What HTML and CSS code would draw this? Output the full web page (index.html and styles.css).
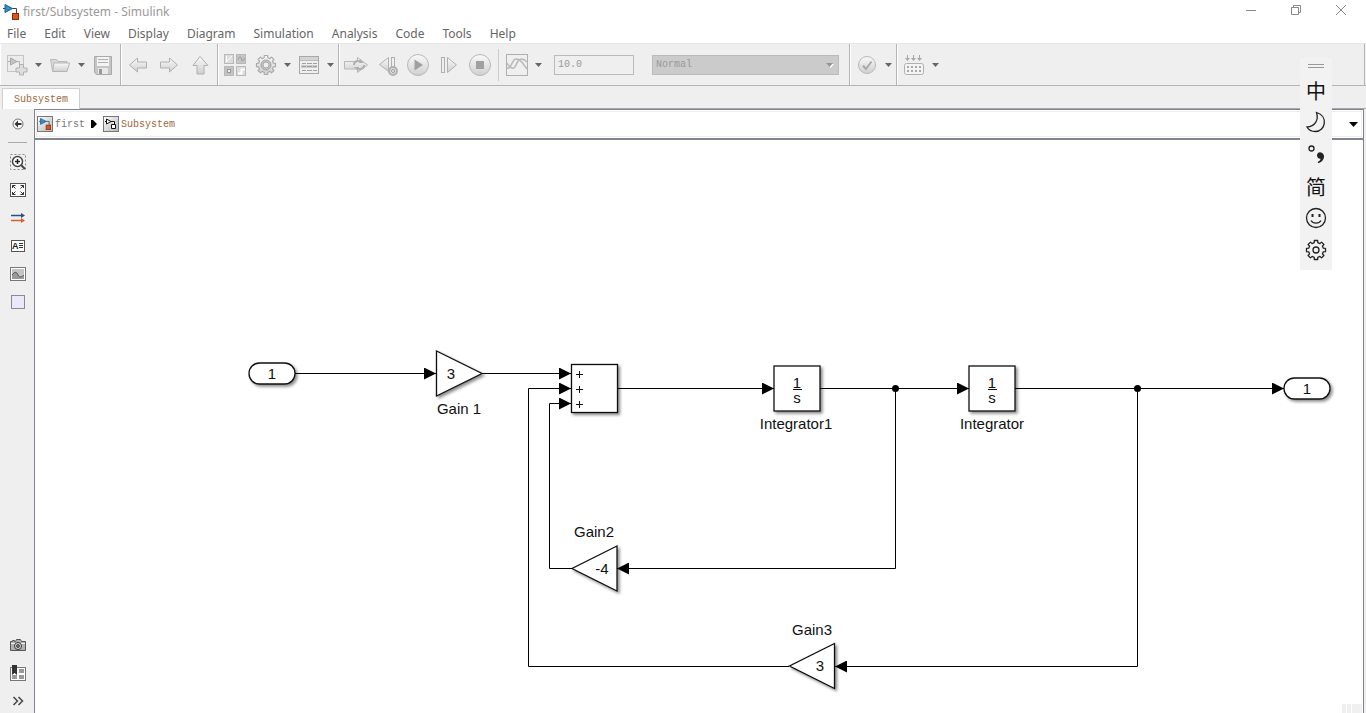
FILE: index.html
```html
<!DOCTYPE html>
<html lang="en">

<head>
    <meta charset="UTF-8">
    <meta name="viewport" content="width=device-width, initial-scale=1.0">
    <title>first/Subsystem - Simulink</title>
    <link rel="stylesheet" href="styles.css">
</head>

<body>
    <!-- Shared icon shapes -->
    <svg class="defs" width="0" height="0" aria-hidden="true">
        <defs>
            <linearGradient id="silver" x1="0" y1="0" x2="0" y2="1">
                <stop offset="0" stop-color="#fafafa" />
                <stop offset="1" stop-color="#cfcfcf" />
            </linearGradient>
            <linearGradient id="tile" x1="0" y1="0" x2="1" y2="1">
                <stop offset="0" stop-color="#ffffff" />
                <stop offset="1" stop-color="#b8b8b8" />
            </linearGradient>
            <symbol id="model" viewBox="0 0 16 16">
                <path d="M0 4.500h2M9 4.500h4.500V10" fill="none" stroke="#444" />
                <path d="M2 .5L9.500 4.500L2 8.500z" fill="#2f8fc8" stroke="#1b5f8d" />
                <rect x="9.500" y="9.500" width="6" height="6" fill="#d9531e" stroke="#8c2d08" />
            </symbol>
            <symbol id="caret" viewBox="0 0 7 4">
                <path d="M0 0h7L3.500 4z" fill="#666" />
            </symbol>
            <symbol id="gear" viewBox="-11 -11 22 22">
                <path d="M-1.800-7.300L-1.700-9.500H1.700L1.800-7.300L3.900-6.400L5.500-7.900L7.900-5.500L6.400-3.900L7.300-1.800L9.500-1.700V1.700L7.300 1.800L6.400 3.900L7.900 5.500L5.500 7.900L3.900 6.400L1.800 7.300L1.700 9.500H-1.700L-1.800 7.300L-3.900 6.400L-5.500 7.900L-7.900 5.500L-6.400 3.900L-7.300 1.800L-9.500 1.700V-1.700L-7.300-1.800L-6.400-3.900L-7.900-5.500L-5.500-7.900L-3.900-6.400z" stroke-linejoin="round" />
            </symbol>
        </defs>
    </svg>

    <div class="window">
        <header class="title-bar">
            <svg class="title-icon" width="16" height="16"><use href="#model" /></svg>
            <span class="title">first/Subsystem - Simulink</span>
            <div class="window-buttons">
                <button type="button" aria-label="Minimize"><svg width="12" height="12"><path d="M1 6.500h10" /></svg></button>
                <button type="button" aria-label="Restore"><svg width="12" height="12"><path d="M1.500 3.500h7v7h-7zM3.500 3.500v-2h7v7h-2" /></svg></button>
                <button type="button" aria-label="Close"><svg width="12" height="12"><path d="M1 1l10 10M11 1L1 11" /></svg></button>
            </div>
        </header>

        <nav class="menu">
            <button type="button">File</button>
            <button type="button">Edit</button>
            <button type="button">View</button>
            <button type="button">Display</button>
            <button type="button">Diagram</button>
            <button type="button">Simulation</button>
            <button type="button">Analysis</button>
            <button type="button">Code</button>
            <button type="button">Tools</button>
            <button type="button">Help</button>
        </nav>

        <div class="toolbar">
            <div class="group">
                <button type="button" class="tool" aria-label="New model">
                    <svg width="22" height="22"><rect x="1.500" y="1.500" width="16" height="16" fill="#ececec" stroke="#c4c4c4" /><path d="M2 7.500h2M10 7.500h3.500V12" fill="none" stroke="#b0b0b0" /><path d="M4.500 4L11 7.500L4.500 11z" fill="#c4c4c4" stroke="#aaa" /><path d="M13.500 10.500h4v3.500h3.500v4h-3.500v3h-4v-3h-3.500v-4h3.500z" fill="#dedede" stroke="#b0b0b0" /></svg>
                </button>
                <button type="button" class="drop" aria-label="New options"><svg width="7" height="4"><use href="#caret" /></svg></button>
                <button type="button" class="tool" aria-label="Open">
                    <svg width="22" height="22"><path d="M3.500 16.500L1.500 5.500h6l1.500 2h9v3" fill="#d8d8d8" stroke="#bbb" /><path d="M3.500 17.500l1.500-8.500h15.500l-2.500 8.500z" fill="url(#silver)" stroke="#b5b5b5" /></svg>
                </button>
                <button type="button" class="drop" aria-label="Open options"><svg width="7" height="4"><use href="#caret" /></svg></button>
                <button type="button" class="tool" aria-label="Save">
                    <svg width="22" height="22"><path d="M2.500 2.500h17v18h-15l-2-2z" fill="#c6c6c6" stroke="#aaa" /><rect x="5" y="3" width="12" height="9" fill="#f4f4f4" /><path d="M6 5.500h10M6 8.500h10" stroke="#b0b0b0" /><rect x="6" y="14" width="10" height="6" fill="#e9e9e9" /><rect x="7" y="15" width="3" height="5" fill="#999" /></svg>
                </button>
            </div>

            <div class="group spaced">
                <button type="button" class="tool" aria-label="Back">
                    <svg width="22" height="22"><path d="M2.500 11l8-7v4h9v6h-9v4z" fill="url(#silver)" stroke="#b0b0b0" /></svg>
                </button>
                <button type="button" class="tool" aria-label="Forward">
                    <svg width="22" height="22"><path d="M19.500 11l-8-7v4h-9v6h9v4z" fill="url(#silver)" stroke="#b0b0b0" /></svg>
                </button>
                <button type="button" class="tool" aria-label="Up to parent">
                    <svg width="22" height="22"><path d="M11 2.500l8 9h-4v8.500h-7v-8.500h-4z" fill="url(#silver)" stroke="#b0b0b0" /></svg>
                </button>
            </div>

            <div class="group">
                <button type="button" class="tool with-space" aria-label="Library browser">
                    <svg width="22" height="22" fill="#dcdcdc" stroke="#b8b8b8"><rect x=".5" y=".5" width="9" height="9" /><rect x="12.500" y=".5" width="9" height="9" fill="#c6c6c6" /><rect x=".5" y="12.500" width="9" height="9" fill="#c2c2c2" /><rect x="12.500" y="12.500" width="9" height="9" /><path d="M2.500 2v6L8 2" fill="none" stroke="#fff" /><path d="M14 6c1-4 3-4 3.500-1s2 3 3-1" fill="none" stroke="#999" /><rect x="3.500" y="15.500" width="3" height="3" fill="#eee" stroke="#999" /><path d="M14 19.500h3.500v-4H21" fill="none" stroke="#fff" stroke-width="2" /></svg>
                </button>
                <button type="button" class="tool" aria-label="Model configuration">
                    <svg width="22" height="22"><use href="#gear" fill="url(#silver)" stroke="#aaa" stroke-width="1.200" /><circle cx="11" cy="11" r="5" fill="#c4c4c4" stroke="#a3a3a3" /><circle cx="11" cy="11" r="3" fill="#efefef" stroke="#aaa" /></svg>
                </button>
                <button type="button" class="drop" aria-label="Configuration options"><svg width="7" height="4"><use href="#caret" /></svg></button>
                <button type="button" class="tool" aria-label="Model explorer">
                    <svg width="22" height="22"><rect x="1.500" y="2.500" width="19" height="17" fill="#efefef" stroke="#a8a8a8" /><path d="M2 4.500h18" stroke="#d4d4d4" stroke-width="3" /><path d="M2 6.500h18" stroke="#bbb" /><rect x="3" y="11" width="16" height="3" fill="#ccc" /><path d="M4 9.500h4m1 0h5m1 0h4M4 12.500h4m1 0h5m1 0h4M4 16.500h4m1 0h5m1 0h4" stroke="#a0a0a0" /></svg>
                </button>
                <button type="button" class="drop" aria-label="Explorer options"><svg width="7" height="4"><use href="#caret" /></svg></button>
            </div>

            <div class="group simulate">
                <div class="run-buttons">
                    <button type="button" class="tool" aria-label="Fast restart">
                        <svg width="26" height="22"><path d="M1.500 7.500h13v-4l10 7.500-10 7.500v-3.500h-13z" fill="url(#silver)" stroke="#b8b8b8" /><path d="M11 11c0-4 4-5 7-3M21 11c0 4-4 5-7 3" fill="none" stroke="#b0b0b0" stroke-width="2" /><path d="M17 5l4 4h-5zM15 17l-4-4h5z" fill="#b0b0b0" /></svg>
                    </button>
                    <button type="button" class="tool" aria-label="Step back">
                        <svg width="22" height="22"><path d="M12.500 3.500v14L3.500 10.500z" fill="url(#silver)" stroke="#b0b0b0" /><rect x="15.500" y="3.500" width="3" height="12" fill="#eee" stroke="#b0b0b0" /><circle cx="17" cy="17" r="4" fill="#ddd" stroke="#b0b0b0" stroke-width="2" /><circle cx="17" cy="17" r="1.500" fill="#f2f2f2" stroke="#999" /></svg>
                    </button>
                    <button type="button" class="tool" aria-label="Run">
                        <svg width="22" height="22"><circle cx="11" cy="11" r="10.500" fill="url(#silver)" stroke="#b8b8b8" /><path d="M7.500 5.500v11l8.500-5.500z" fill="#a0a0a0" /></svg>
                    </button>
                    <button type="button" class="tool" aria-label="Step forward">
                        <svg width="22" height="22"><rect x="3.500" y="3.500" width="3" height="15" fill="#eee" stroke="#b0b0b0" /><path d="M9.500 3.500v15l9-7.500z" fill="url(#silver)" stroke="#b0b0b0" /></svg>
                    </button>
                    <button type="button" class="tool" aria-label="Stop">
                        <svg width="22" height="22"><circle cx="11" cy="11" r="10.500" fill="url(#silver)" stroke="#b8b8b8" /><rect x="7" y="7" width="8" height="8" fill="#a0a0a0" /></svg>
                    </button>
                </div>
                <span class="separator"></span>
                <button type="button" class="tool" aria-label="Simulation data inspector">
                    <svg width="22" height="22"><rect x=".5" y=".5" width="21" height="21" fill="#efefef" stroke="#b0b0b0" /><path d="M1 14c4 2 5-9 9-9s6 3 11 10" fill="none" stroke="#b8b8b8" stroke-width="1.500" /><path d="M1 9c3 6 7 7 9 2s5-9 11-3" fill="none" stroke="#b8b8b8" stroke-width="1.500" /></svg>
                </button>
                <button type="button" class="drop" aria-label="Inspector options"><svg width="7" height="4"><use href="#caret" /></svg></button>
                <input class="stop-time" type="text" value="10.0" aria-label="Simulation stop time" disabled>
                <div class="mode">
                    <select aria-label="Simulation mode" disabled>
                        <option>Normal</option>
                    </select>
                    <svg class="mode-arrow" width="8" height="5"><path d="M1 1h7L4.500 5z" fill="#fff" /><path d="M0 0h7L3.500 4z" fill="#959595" /></svg>
                </div>
            </div>

            <div class="group">
                <button type="button" class="tool" aria-label="Model advisor">
                    <svg width="22" height="22"><circle cx="11" cy="11" r="8.500" fill="url(#silver)" stroke="#b8b8b8" /><path d="M7 11.500l3 3.500 5.500-7.500" fill="none" stroke="#aaa" stroke-width="2" /></svg>
                </button>
                <button type="button" class="drop" aria-label="Advisor options"><svg width="7" height="4"><use href="#caret" /></svg></button>
            </div>

            <div class="group last">
                <button type="button" class="tool" aria-label="Build model">
                    <svg width="22" height="22"><path d="M4.500 1v4M10.500 1v4M16.500 1v4" stroke="#a8a8a8" /><path d="M2 4h5L4.500 7zM8 4h5l-2.500 3zM14 4h5l-2.500 3z" fill="#a8a8a8" /><rect x="1.500" y="9.500" width="19" height="11" rx="2" fill="#f4f4f4" stroke="#b0b0b0" /><path d="M4 13h14M4 17h14" stroke="#a8a8a8" stroke-width="2" stroke-dasharray="2 2" /></svg>
                </button>
                <button type="button" class="drop" aria-label="Build options"><svg width="7" height="4"><use href="#caret" /></svg></button>
            </div>
        </div>

        <div class="tabs">
            <button type="button" class="tab">Subsystem</button>
        </div>

        <div class="workspace">
            <aside class="palette">
                <button type="button" aria-label="Hide model browser">
                    <svg width="16" height="16"><circle cx="8" cy="8" r="5" fill="#f8f8f8" stroke="#777" /><path d="M4.500 8L8 4.500V7h3.500v2H8v2.500z" fill="#333" /></svg>
                </button>
                <hr>
                <button type="button" aria-label="Zoom">
                    <svg width="16" height="16"><rect x=".5" y=".5" width="15" height="15" fill="none" stroke="#888" stroke-dasharray="2 2" /><circle cx="7.500" cy="7.500" r="5" fill="#fff" stroke="#444" stroke-width="1.500" /><path d="M5 7.500h5M7.500 5v5" stroke="#222" stroke-width="1.500" /><path d="M11 11l4 4" stroke="#444" stroke-width="2" /></svg>
                </button>
                <button type="button" aria-label="Fit to view">
                    <svg width="16" height="16"><rect x=".5" y="1.500" width="15" height="13" fill="#fff" stroke="#555" /><path d="M2.500 6V3.500H5.500M2.500 3.500l3 3M13.500 6V3.500h-3M13.500 3.500l-3 3M2.500 10v2.500h3M2.500 12.500l3-3M13.500 10v2.500h-3M13.500 12.500l-3-3" fill="none" stroke="#333" /></svg>
                </button>
                <button type="button" aria-label="Sample time display">
                    <svg width="16" height="16"><path d="M1 5.500h11" stroke="#2c4f80" stroke-width="1.500" /><path d="M11 3l4 2.500-4 2.500z" fill="#2c4f80" /><path d="M1 10.500h11" stroke="#d6622a" stroke-width="1.500" /><path d="M11 8l4 2.500-4 2.500z" fill="#d6622a" /></svg>
                </button>
                <button type="button" aria-label="Annotation">
                    <svg width="16" height="16"><rect x="1.500" y="2.500" width="13" height="11" fill="#fff" stroke="#555" /><text class="icon-text" x="2" y="11">A</text><path d="M9 5.500h4M9 7.500h4M9 9.500h4" stroke="#333" /></svg>
                </button>
                <button type="button" aria-label="Image">
                    <svg width="16" height="16"><rect x=".5" y="1.500" width="15" height="13" fill="#fff" stroke="#777" /><rect x="2" y="3" width="12" height="10" fill="#c4c4c4" /><path d="M2 13V9c3-4 5-3 6 0s4 2 6 0v4z" fill="#999" /><path d="M2 9c3-4 5-3 6 0s4 2 6 0" fill="none" stroke="#555" /></svg>
                </button>
                <button type="button" aria-label="Area">
                    <svg width="16" height="16"><rect x="1.500" y="1.500" width="13" height="13" fill="#e9e9fa" stroke="#8a8a90" /></svg>
                </button>
                <div class="palette-bottom">
                    <button type="button" aria-label="Screenshots">
                        <svg width="16" height="16"><path d="M.5 4.500h2v-1h2v1h1l1-2h4l1 2h4v9H.5z" fill="#b0b0b0" stroke="#555" /><path d="M1 6.500h14" stroke="#eee" /><circle cx="8" cy="9" r="3.500" fill="#ddd" stroke="#333" /><circle cx="8" cy="9" r="1.500" fill="#777" stroke="#444" /></svg>
                    </button>
                    <button type="button" aria-label="Model data">
                        <svg width="16" height="16"><rect x=".5" y="2.500" width="15" height="13" fill="#fff" stroke="#777" /><path d="M9 4h5v4H9zM2 10h5v4H2zM9 10h5v4H9z" fill="#999" /><path d="M2 0h5v10L4.500 8 2 10z" fill="#333" /></svg>
                    </button>
                    <button type="button" aria-label="More">
                        <svg width="16" height="16"><path d="M3.500 4l4 4-4 4M8.500 4l4 4-4 4" fill="none" stroke="#444" stroke-width="1.500" /></svg>
                    </button>
                </div>
            </aside>

            <main class="editor">
                <nav class="breadcrumb">
                    <a href="#first">
                        <svg width="16" height="16"><rect x=".5" y=".5" width="15" height="15" fill="url(#tile)" stroke="#777" /><svg x="2" y="2" width="12" height="12"><use href="#model" /></svg></svg>
                        <span>first</span>
                    </a>
                    <svg width="6" height="8"><path d="M0 0h2l4 4-4 4H0z" /></svg>
                    <a href="#subsystem" class="current">
                        <svg width="16" height="16"><rect x=".5" y=".5" width="15" height="15" fill="url(#tile)" stroke="#777" /><path d="M3.500 3v5l4.500-2.500zM8 5.500h3.500V8M8.500 8.500h4v4h-4z" fill="#fff" stroke="#111" /><path d="M2 5.500h2" stroke="#111" /></svg>
                        <span>Subsystem</span>
                    </a>
                    <button type="button" class="history" aria-label="Open hierarchy"><svg width="9" height="5"><path d="M0 0h9L4.500 5z" /></svg></button>
                </nav>

                <div class="canvas">
                    <svg class="diagram" role="img" aria-label="Block diagram">
                        <defs>
                            <marker id="arrow" markerWidth="12" markerHeight="12" refX="12" refY="6" orient="auto" markerUnits="userSpaceOnUse">
                                <path d="M0 0L12 6L0 12z" />
                            </marker>
                            <filter id="shadow" x="-20%" y="-20%" width="150%" height="150%">
                                <feDropShadow dx="2" dy="2" stdDeviation="1.500" flood-color="#000" flood-opacity=".45" />
                            </filter>
                        </defs>
                        <g transform="translate(-35 -140)">
                            <!-- Blocks -->
                            <g class="block">
                                <rect x="249" y="363" width="46" height="21" rx="10.500" />
                                <path d="M436.500 351v45L482 373.500z" />
                                <rect x="571.500" y="364.500" width="46" height="48" />
                                <rect x="774" y="366" width="46" height="45" />
                                <rect x="969" y="366" width="46" height="45" />
                                <rect x="1284" y="378" width="46" height="21" rx="10.500" />
                                <path d="M617 546v45L572 568.500z" />
                                <path d="M834.500 643.500v45L789.500 666z" />
                            </g>

                            <!-- Signals -->
                            <g class="signal">
                                <path d="M295 373.500H436" />
                                <path d="M482 373.500H571" />
                                <path d="M618 388.500H774" />
                                <path d="M820 388.500H969" />
                                <path d="M1015 388.500H1284" />
                                <path d="M895.500 388.500V568.500H617" />
                                <path d="M572 568.500H549.500V403.500H571" />
                                <path d="M1137.500 388.500V666.500H835" />
                                <path d="M789 666.500H528.500V388.500H571" />
                            </g>
                            <circle cx="895.500" cy="388.500" r="3.500" />
                            <circle cx="1137.500" cy="388.500" r="3.500" />

                            <!-- Values -->
                            <g class="value">
                                <text x="272" y="379">1</text>
                                <text x="451" y="379">3</text>
                                <text x="797" y="388">1</text>
                                <text x="797" y="403">s</text>
                                <text x="992" y="388">1</text>
                                <text x="992" y="403">s</text>
                                <text x="1307" y="394">1</text>
                                <text x="602" y="574">-4</text>
                                <text x="820" y="671">3</text>
                            </g>
                            <path class="wire" d="M793 389.500h9M988 389.500h9" />
                            <path class="wire" d="M576 374.500h7M579.500 371v7M576 389.500h7M579.500 386v7M576 404.500h7M579.500 401v7" />

                            <!-- Names -->
                            <g class="name">
                                <text x="459" y="414">Gain 1</text>
                                <text x="796" y="429">Integrator1</text>
                                <text x="992" y="429">Integrator</text>
                                <text x="594" y="537">Gain2</text>
                                <text x="812" y="635">Gain3</text>
                            </g>
                        </g>
                    </svg>
                    <div class="corner"><i></i><i></i><i></i></div>
                </div>
            </main>
        </div>

        <!-- Floating input method bar -->
        <div class="ime">
            <span class="handle"></span>
            <button type="button" lang="zh">中</button>
            <button type="button" aria-label="Half width">
                <svg width="22" height="22"><path d="M11.500 1.500c12 3.500 9 19 -1 19c-4 0-7-1.500-8.500-4.500c8-.5 12-7 9.500-14.500z" /></svg>
            </button>
            <button type="button" aria-label="Punctuation">
                <svg width="22" height="22"><circle cx="6.500" cy="5.500" r="2.500" /><path d="M13 19.500c3-1.500 3.500-3 3-4.500c-4 .5-4.500-5-1-5c5 0 4.500 8-2 9.500z" fill="#222" /></svg>
            </button>
            <button type="button" lang="zh">简</button>
            <button type="button" aria-label="Emoji">
                <svg width="22" height="22"><circle cx="11" cy="11" r="9.500" /><path d="M6 13.500c2 3.500 8 3.500 10 0" /><path d="M7.500 7v3M14.500 7v3" stroke-width="2" /></svg>
            </button>
            <button type="button" aria-label="Settings">
                <svg width="22" height="22"><use href="#gear" /><circle cx="11" cy="11" r="3" /></svg>
            </button>
        </div>
    </div>
</body>

</html>
```

FILE: styles.css
```css
* {
    box-sizing: border-box;
}

body {
    margin: 0;
    background-color: #efefef;
    font-family: "Noto Sans", "Open Sans", sans-serif;
    font-size: 12px;
}

button {
    display: flex;
    justify-content: center;
    align-items: center;
    margin: 0;
    padding: 0;
    border: 0;
    background: none;
    font: inherit;
    color: inherit;
}

svg {
    display: block;
    flex: none;
}

.defs {
    position: absolute;
}

.window {
    position: relative;
    display: flex;
    flex-direction: column;
    height: 100vh;
    overflow: hidden;
}

/* Title and menu */
.title-bar {
    display: flex;
    align-items: center;
    gap: 4px;
    height: 23px;
    padding-left: 3px;
    background: #fff;
    color: #999;
}

.window-buttons {
    display: flex;
    align-self: flex-start;
    margin-left: auto;
    padding-right: 3px;
}

.window-buttons button {
    width: 45px;
    height: 20px;
}

.window-buttons svg {
    fill: none;
    stroke: #888;
}

.menu {
    display: flex;
    gap: 18px;
    height: 20px;
    padding-left: 7px;
    background: #fff;
    color: #666;
}

/* Toolbar */
.toolbar {
    display: flex;
    height: 43px;
    border-top: 1px solid #e6e6e6;
    border-bottom: 1px solid #b4b4b4;
}

.group {
    display: flex;
    align-items: center;
    padding-left: 5px;
    border-left: 1px solid #fff;
    border-right: 1px solid #b4b4b4;
}

.group:first-child {
    padding-right: 6px;
}

.group.last {
    flex: 1;
    margin-right: 1px;
}

.spaced {
    gap: 9px;
    padding-right: 6px;
}

.tool {
    width: 22px;
    height: 22px;
}

.with-space {
    margin-right: 9px;
}

.drop {
    width: 16px;
    height: 22px;
    margin: 0 3px 0 2px;
}

.drop:last-child {
    margin-right: 0;
}

.simulate {
    padding-right: 10px;
}

.run-buttons {
    display: flex;
    gap: 9px;
}

.separator {
    width: 1px;
    height: 32px;
    margin: 0 7px;
    background: #ccc;
}

.stop-time,
.mode select {
    height: 20px;
    border: 1px solid #bbb;
    border-radius: 0;
    font-family: "Liberation Mono", monospace;
    font-size: 10px;
    color: #999;
    opacity: 1;
}

.stop-time {
    width: 80px;
    margin-left: 5px;
    padding: 0 3px;
    background: #efefef;
}

.mode {
    position: relative;
    width: 187px;
    margin-left: 18px;
}

.mode select {
    display: block;
    width: 100%;
    padding: 0 3px;
    appearance: none;
    background: #cbcbcb;
}

.mode-arrow {
    position: absolute;
    top: 8px;
    right: 5px;
}

/* Tabs */
.tabs {
    display: flex;
    align-items: flex-end;
    height: 23px;
    padding-left: 2px;
    background: linear-gradient(90deg, #efefef 34px, #a4a6aa 34px) bottom / 100% 1px no-repeat;
}

.tab {
    width: 78px;
    height: 21px;
    border: 1px solid #d0d0d0;
    border-bottom: 0;
    background: #fff;
    font-family: "Liberation Mono", monospace;
    font-size: 10px;
    color: #a0693c;
}

/* Workspace */
.workspace {
    display: flex;
    flex: 1;
    min-height: 0;
}

.palette {
    display: flex;
    flex-direction: column;
    width: 34px;
    padding: 1px 0 0 2px;
}

.palette button {
    width: 32px;
    height: 28px;
}

.palette hr {
    width: 19px;
    margin: 4px 0 5px 6px;
    border: 0;
    border-top: 1px solid #aaa;
}

.palette-bottom {
    margin-top: auto;
    margin-bottom: -2px;
}

.icon-text {
    font: bold 9px "Liberation Sans", sans-serif;
    fill: #222;
}

.editor {
    display: flex;
    flex: 1;
    flex-direction: column;
    margin-right: 2px;
    border: 1px solid #7f848e;
    border-bottom: 0;
    background: #fff;
}

.breadcrumb {
    display: flex;
    align-items: center;
    gap: 6px;
    height: 30px;
    padding: 0 5px 0 2px;
    border-bottom: 2px solid #7f848e;
    font-family: "Liberation Mono", monospace;
    font-size: 10px;
    box-shadow: inset 0 0 0 1px #fff, inset 0 0 0 2px #eee;
}

.breadcrumb a {
    display: flex;
    align-items: center;
    gap: 2px;
    color: #777;
    text-decoration: none;
}

.breadcrumb .current {
    color: #a0693c;
}

.history {
    width: 10px;
    height: 20px;
    margin-left: auto;
}

/* Block diagram */
.canvas {
    position: relative;
    flex: 1;
    min-height: 0;
}

.diagram {
    width: 100%;
    height: 100%;
    font-family: "Liberation Sans", Arial, sans-serif;
    font-size: 15px;
    text-anchor: middle;
}

.block > * {
    fill: #fff;
    stroke: #111;
    stroke-width: 1.3;
    filter: url(#shadow);
}

.signal path {
    fill: none;
    stroke: #000;
    marker-end: url(#arrow);
}

.signal path,
.wire {
    stroke-width: 1;
}

.wire {
    fill: none;
    stroke: #111;
}

.name,
.value {
    fill: #111;
}

.corner {
    position: absolute;
    right: 1px;
    bottom: 0;
    display: flex;
    gap: 1px;
}

.corner i {
    width: 4px;
    height: 9px;
    background: #f0f0f0;
}

.corner i:last-child {
    width: 10px;
}

/* Input method bar */
.ime {
    position: absolute;
    top: 58px;
    right: 34px;
    width: 32px;
    padding-bottom: 4px;
    background: #f2f2f2;
    font-family: "Noto Sans CJK SC", sans-serif;
    font-size: 20px;
    color: #111;
}

.handle {
    display: block;
    width: 16px;
    height: 4px;
    margin: 6px auto;
    border: solid #999;
    border-width: 1px 0;
}

.ime button {
    width: 32px;
    height: 32px;
}

.ime svg {
    fill: none;
    stroke: #222;
    stroke-width: 1.3;
}
```
